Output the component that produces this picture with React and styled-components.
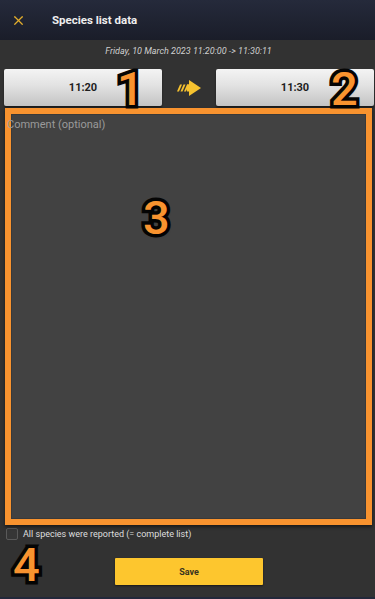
import React from 'react';
import styled, { createGlobalStyle } from 'styled-components';
import { X } from 'lucide-react';

const GlobalStyle = createGlobalStyle`
  html, body {
    margin: 0;
    padding: 0;
    background: #323232;
  }
  body {
    font-family: Roboto, "Noto Sans", sans-serif;
  }
`;

const Screen = styled.div`
  position: relative;
  width: 375px;
  height: 599px;
  overflow: hidden;
  display: flex;
  flex-direction: column;
  background: #323232;
`;

const Header = styled.header`
  height: 40px;
  flex-shrink: 0;
  display: flex;
  align-items: center;
  padding-left: 11px;
  background: linear-gradient(180deg, #252a3b 0%, #1a1d29 100%);
  box-sizing: border-box;
`;

const Title = styled.h1`
  margin: 0 0 0 26px;
  font-size: 11.5px;
  font-weight: 700;
  color: #eeeeee;
`;

const DateLine = styled.div`
  margin-top: 5px;
  height: 12px;
  line-height: 12px;
  text-align: center;
  font-size: 9px;
  font-style: italic;
  color: #cfcfcf;
  padding-left: 2px;
`;

const TimeRow = styled.div`
  margin-top: 12px;
  display: flex;
  align-items: center;
  padding: 0 1px 0 4px;
`;

const TimeButton = styled.button`
  width: 158px;
  height: 37px;
  border: none;
  border-radius: 2px;
  background: linear-gradient(180deg, #f4f4f4 0%, #e2e2e2 45%, #c3c3c3 100%);
  box-shadow: 0 2px 2px rgba(0, 0, 0, 0.45);
  font-family: Roboto, sans-serif;
  font-size: 11px;
  font-weight: 700;
  color: #1e1e1e;
  padding: 0;
`;

const ArrowSlot = styled.div`
  flex: 1;
  display: flex;
  justify-content: center;
  align-items: center;
  padding-top: 1px;
`;

const CommentField = styled.div`
  position: relative;
  margin: 2px 0 0 5px;
  width: 367px;
  height: 417px;
  box-sizing: border-box;
  border: 6px solid #f8932f;
  box-shadow: 0 2px 3px rgba(0, 0, 0, 0.5);
`;

const CommentInput = styled.textarea`
  display: block;
  width: 100%;
  height: 100%;
  box-sizing: border-box;
  margin: 0;
  resize: none;
  border: 1px solid #393939;
  background: #424242;
  outline: none;
`;

const FloatingLabel = styled.span`
  position: absolute;
  left: -4px;
  top: 4px;
  font-size: 11px;
  color: #9a9a9a;
  pointer-events: none;
`;

const CheckRow = styled.label`
  margin: 3px 0 0 6px;
  display: flex;
  align-items: center;
  gap: 5px;
  height: 12px;
`;

const CheckBox = styled.span`
  width: 10px;
  height: 10px;
  border: 1px solid #5a5a5a;
  border-radius: 2px;
  background: #363636;
`;

const CheckText = styled.span`
  font-size: 9px;
  color: #dedede;
`;

const SaveButton = styled.button`
  margin: 18px 0 0 115px;
  width: 148px;
  height: 27px;
  border: none;
  border-radius: 1px;
  background: #fdc62e;
  box-shadow: 0 1px 2px rgba(0, 0, 0, 0.5);
  font-family: Roboto, sans-serif;
  font-size: 9px;
  font-weight: 700;
  color: #3a3320;
  padding: 0;
`;

const BottomEdge = styled.div`
  margin-top: auto;
  height: 2px;
  background: #23283a;
`;

const Marker = styled.span`
  position: absolute;
  left: ${(p) => p.x}px;
  top: ${(p) => p.y}px;
  font-family: Roboto, sans-serif;
  font-size: 47px;
  font-weight: 500;
  line-height: 1;
  color: #f8932f;
  -webkit-text-stroke: 7px #050505;
  paint-order: stroke fill;
  text-shadow: 1px 2px 3px rgba(0, 0, 0, 0.6);
  pointer-events: none;
`;

const StripeArrow = () => (
  <svg width="24" height="16" viewBox="0 0 24 16">
    <g fill="#f6c22f">
      <polygon points="12,0 24,8 12,16" />
      <rect x="10" y="4.5" width="3" height="7" />
      <polygon points="0,11.5 2,11.5 5,4.5 3,4.5" />
      <polygon points="3.5,11.5 5.5,11.5 8.5,4.5 6.5,4.5" />
      <polygon points="7,11.5 9,11.5 12,4.5 10,4.5" />
    </g>
  </svg>
);

export default function App() {
  return (
    <Screen>
      <GlobalStyle />
      <Header>
        <X size={15} color="#e2ad2c" strokeWidth={2} />
        <Title>Species list data</Title>
      </Header>
      <DateLine>Friday, 10 March 2023 11:20:00 -&gt; 11:30:11</DateLine>
      <TimeRow>
        <TimeButton>11:20</TimeButton>
        <ArrowSlot>
          <StripeArrow />
        </ArrowSlot>
        <TimeButton>11:30</TimeButton>
      </TimeRow>
      <CommentField>
        <CommentInput />
        <FloatingLabel>Comment (optional)</FloatingLabel>
      </CommentField>
      <CheckRow>
        <CheckBox />
        <CheckText>All species were reported (= complete list)</CheckText>
      </CheckRow>
      <SaveButton>Save</SaveButton>
      <BottomEdge />

      <Marker x={117} y={65}>1</Marker>
      <Marker x={331} y={65}>2</Marker>
      <Marker x={143} y={194}>3</Marker>
      <Marker x={13} y={541}>4</Marker>
    </Screen>
  );
}
